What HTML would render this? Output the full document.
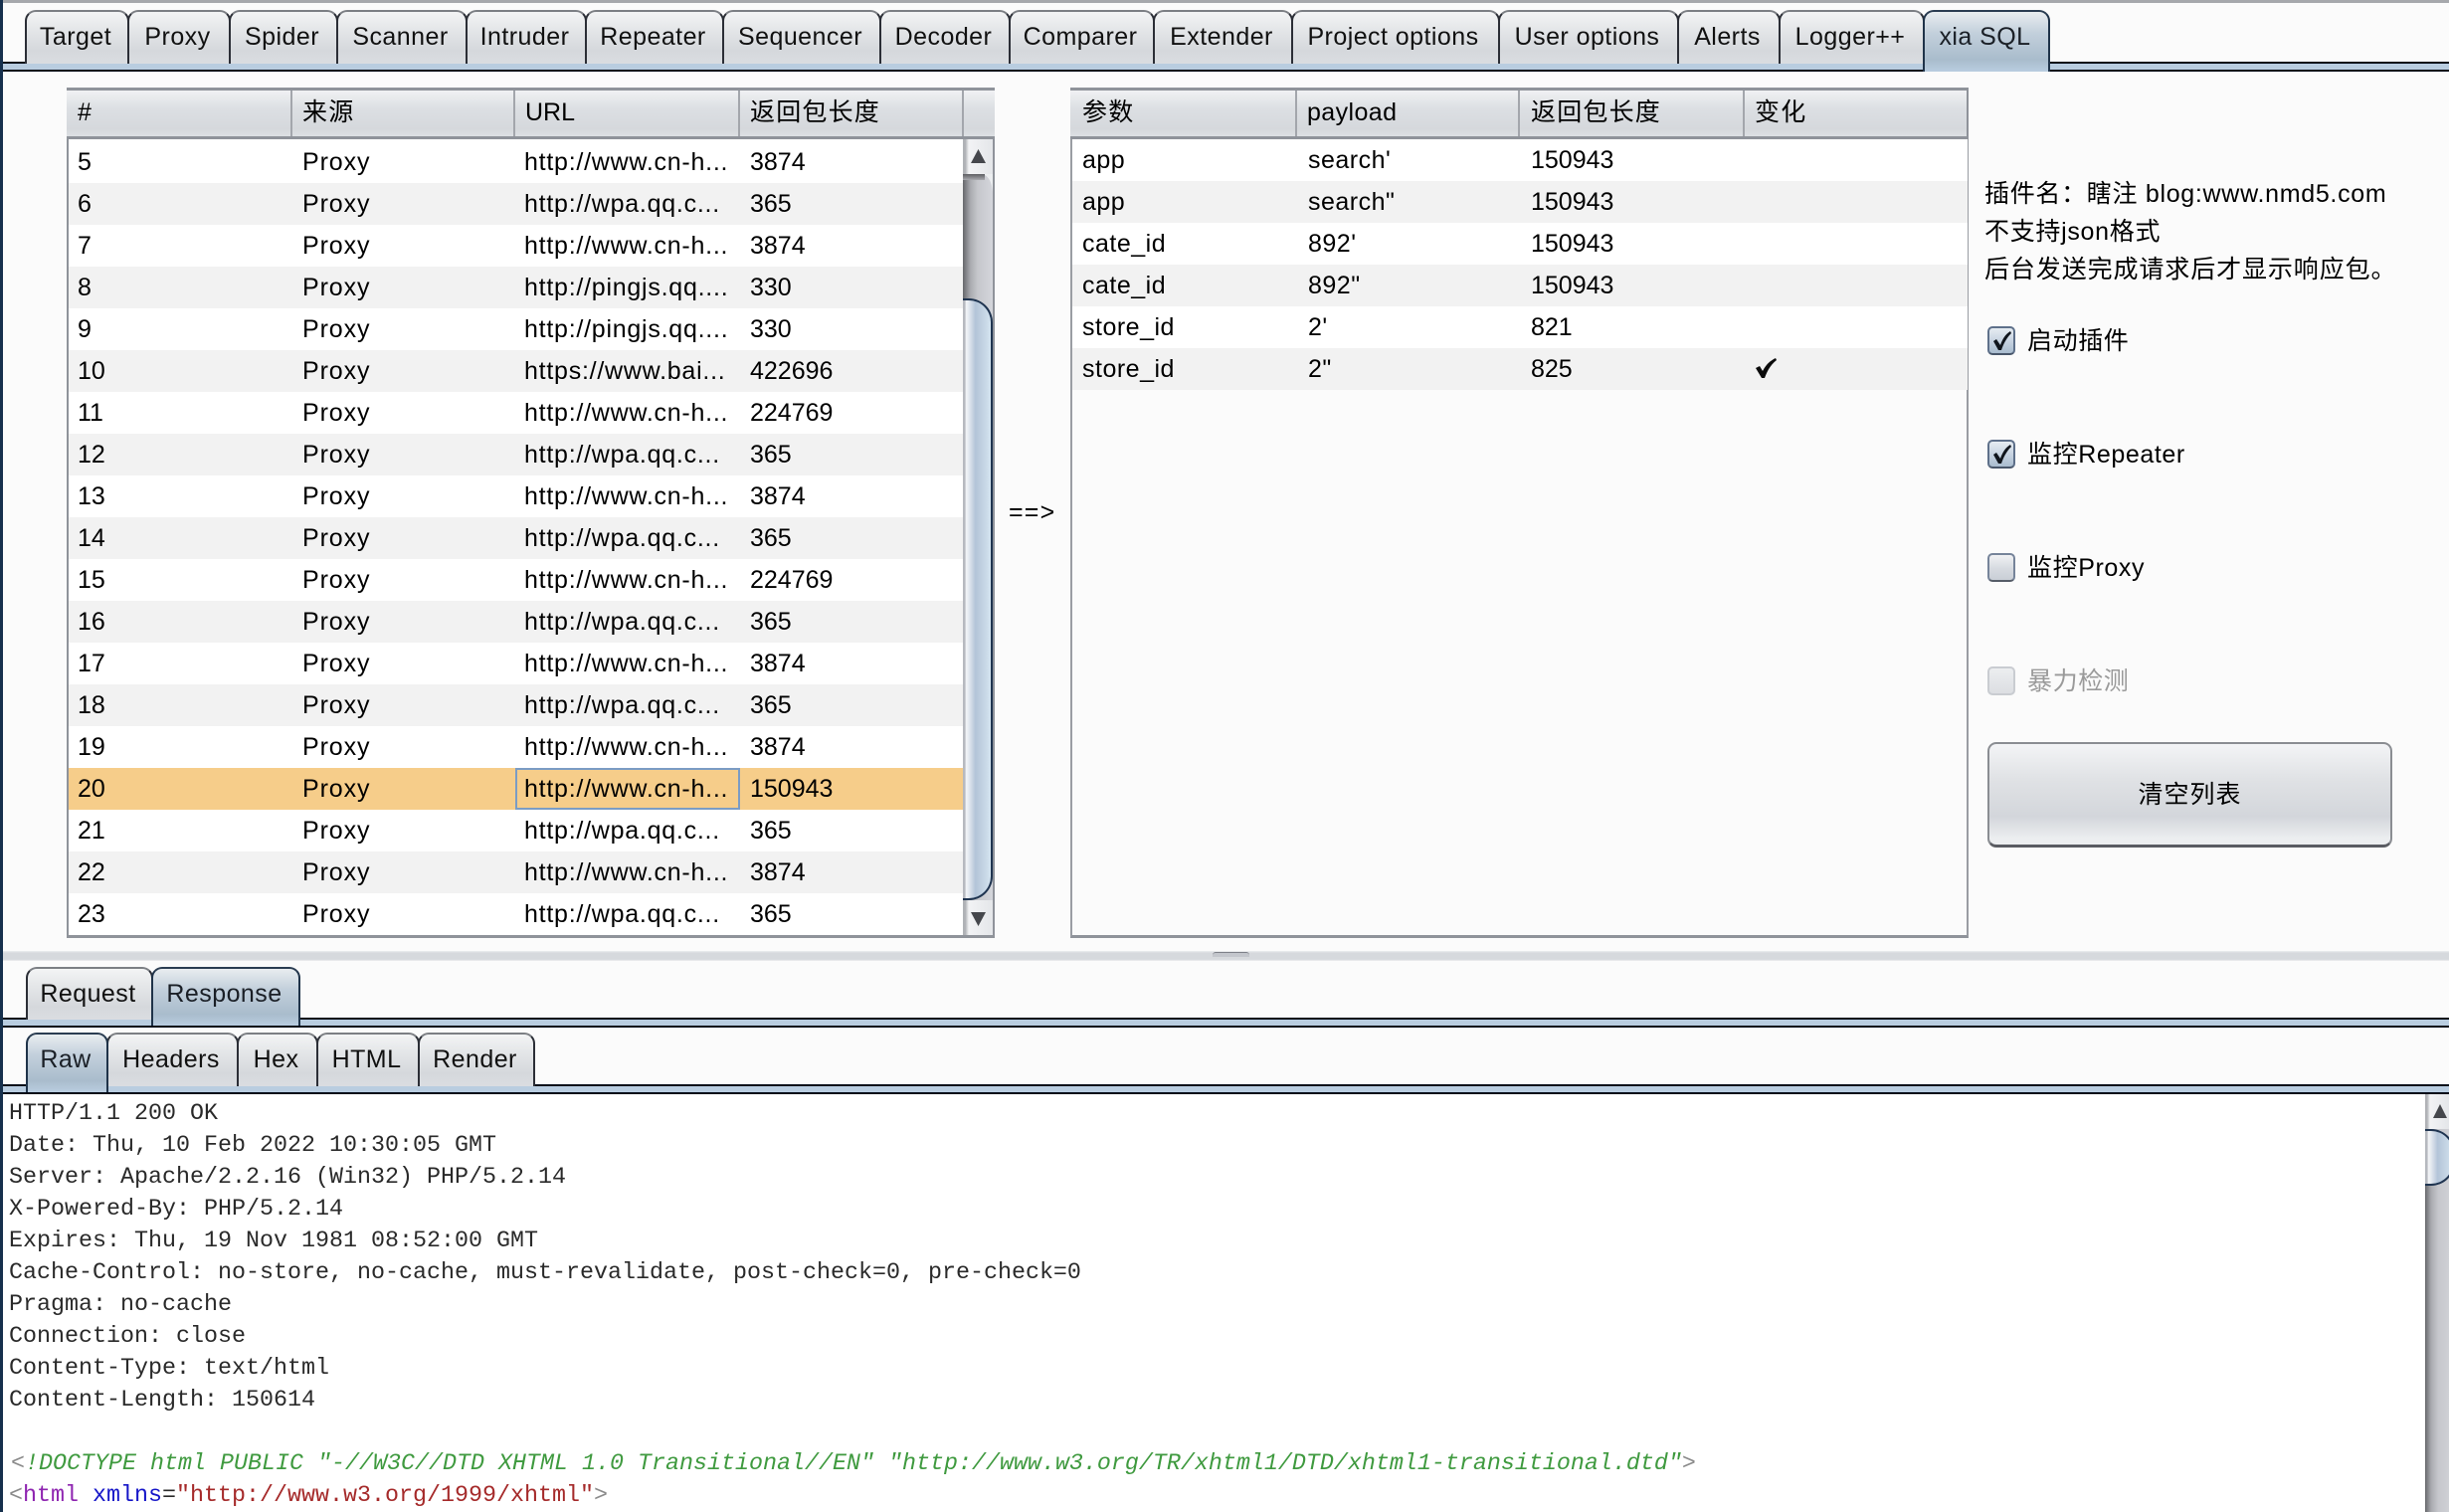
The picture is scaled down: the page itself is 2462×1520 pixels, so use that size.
<!DOCTYPE html>
<html lang="zh"><head><meta charset="utf-8"><title>xia SQL</title>
<style>
html,body{margin:0;padding:0;width:2462px;height:1520px;overflow:hidden;background:#fbfbfb}
body{position:relative;font-family:"Liberation Sans","Noto Sans CJK SC",sans-serif;font-size:25px;color:#000}
div,span{box-sizing:border-box}
.a{position:absolute}
.bar{position:absolute;left:3px;right:0;background:#b9cde0;border-top:2px solid #030a18;border-bottom:2px solid #030a18;height:10px}
.t{position:absolute;height:54px;border:2px solid #2b2e36;border-bottom:0;border-top:2px solid #7c7f84;border-radius:11px 11px 0 0;background:linear-gradient(#f3f4f5,#e6e8ea 30%,#d5d8dc 75%,#dadde1);line-height:51px;text-align:center;white-space:nowrap;color:#111;letter-spacing:.45px;text-indent:-3px}
.t.s{border-color:#1f3349;border-top-color:#2b3d52;background:linear-gradient(#e9edf0,#c3d0dc 35%,#a9bccc 80%,#b9cde0);height:62px;z-index:2;color:#1a1f26}
.h{position:absolute;top:88px;height:52px;border-top:3px solid #8f939a;border-bottom:3px solid #8f939a;background:linear-gradient(#f0f1f3,#dcdfe3 40%,#d5d8dc 85%,#dde0e3)}
.h i{position:absolute;top:0;bottom:0;width:2px;background:#a3a6ac}
.h span{position:absolute;top:0;line-height:45px;white-space:nowrap}
.cj{letter-spacing:1.2px}
.r{position:absolute;left:69px;width:899px;height:42px}
.r span,.q span{position:absolute;top:0;line-height:42px;white-space:nowrap}
.r.o,.q.o{background:#f2f2f2}
.q{position:absolute;left:1078px;width:900px;height:42px}
.q span{letter-spacing:.5px}
.q .k3{letter-spacing:0}
.s1{left:9px}.s2{left:235px;letter-spacing:.9px}.s3{left:458px;letter-spacing:.75px}.s4{left:685px}
.k1{left:10px}.k2{left:237px}.k3{left:461px}.k4{left:686px}
.c{position:absolute;left:1998px;width:28px;height:29px;border:2px solid #76849a;border-bottom-color:#565d68;border-radius:5px;background:linear-gradient(#f1f2f4,#d6dae0 55%,#c9cfd6)}
.c.on{border-color:#5e708a;border-bottom-color:#48566a;background:linear-gradient(#e6ecf2,#c5d2e0 55%,#a9bccf)}
.c.dis{border-color:#c9ccd1;background:linear-gradient(#eceef0,#dcdee2)}
.l{position:absolute;left:2038px;white-space:nowrap;line-height:30px;letter-spacing:.6px}
.m{position:absolute;left:9px;height:32px;line-height:32px;font-family:"Liberation Mono","Noto Sans CJK SC",monospace;font-size:23.33px;white-space:pre;color:#2a2a2a}
.g{color:#3f9a3f;font-style:italic}
.n{position:absolute;left:1995px;line-height:38px;white-space:nowrap;letter-spacing:.7px}
</style></head><body>

<div class="a" style="left:3px;right:0;top:0;height:3px;background:#a6a8ac"></div>
<div class="bar" style="top:62px"></div>

<div class="t" style="left:25px;top:10px;width:105px">Target</div>
<div class="t" style="left:128px;top:10px;width:104px">Proxy</div>
<div class="t" style="left:230px;top:10px;width:110px">Spider</div>
<div class="t" style="left:338px;top:10px;width:132px">Scanner</div>
<div class="t" style="left:468px;top:10px;width:122px">Intruder</div>
<div class="t" style="left:588px;top:10px;width:140px">Repeater</div>
<div class="t" style="left:726px;top:10px;width:160px">Sequencer</div>
<div class="t" style="left:884px;top:10px;width:132px">Decoder</div>
<div class="t" style="left:1014px;top:10px;width:147px">Comparer</div>
<div class="t" style="left:1159px;top:10px;width:141px">Extender</div>
<div class="t" style="left:1298px;top:10px;width:210px;text-indent:-5px">Project options</div>
<div class="t" style="left:1506px;top:10px;width:182px">User options</div>
<div class="t" style="left:1686px;top:10px;width:104px">Alerts</div>
<div class="t" style="left:1788px;top:10px;width:147px">Logger++</div>
<div class="t s" style="left:1933px;top:10px;width:128px">xia SQL</div>

<!-- left table -->
<div class="a" style="left:67px;top:88px;width:933px;height:855px;background:#fff;border:2px solid #8f939a;border-top:0;border-bottom:3px solid #8f939a"></div>
<div class="h" style="left:67px;width:933px">
<i style="left:225px"></i><i style="left:449px"></i><i style="left:675px"></i><i style="left:900px"></i>
<span style="left:11px">#</span><span class="cj" style="left:237px">来源</span><span style="left:461px">URL</span><span class="cj" style="left:687px">返回包长度</span>
</div>

<div class="r" style="top:142px"><span class="s1">5</span><span class="s2">Proxy</span><span class="s3">http://www.cn-h...</span><span class="s4">3874</span></div>
<div class="r o" style="top:184px"><span class="s1">6</span><span class="s2">Proxy</span><span class="s3">http://wpa.qq.c...</span><span class="s4">365</span></div>
<div class="r" style="top:226px"><span class="s1">7</span><span class="s2">Proxy</span><span class="s3">http://www.cn-h...</span><span class="s4">3874</span></div>
<div class="r o" style="top:268px"><span class="s1">8</span><span class="s2">Proxy</span><span class="s3">http://pingjs.qq....</span><span class="s4">330</span></div>
<div class="r" style="top:310px"><span class="s1">9</span><span class="s2">Proxy</span><span class="s3">http://pingjs.qq....</span><span class="s4">330</span></div>
<div class="r o" style="top:352px"><span class="s1">10</span><span class="s2">Proxy</span><span class="s3">https://www.bai...</span><span class="s4">422696</span></div>
<div class="r" style="top:394px"><span class="s1">11</span><span class="s2">Proxy</span><span class="s3">http://www.cn-h...</span><span class="s4">224769</span></div>
<div class="r o" style="top:436px"><span class="s1">12</span><span class="s2">Proxy</span><span class="s3">http://wpa.qq.c...</span><span class="s4">365</span></div>
<div class="r" style="top:478px"><span class="s1">13</span><span class="s2">Proxy</span><span class="s3">http://www.cn-h...</span><span class="s4">3874</span></div>
<div class="r o" style="top:520px"><span class="s1">14</span><span class="s2">Proxy</span><span class="s3">http://wpa.qq.c...</span><span class="s4">365</span></div>
<div class="r" style="top:562px"><span class="s1">15</span><span class="s2">Proxy</span><span class="s3">http://www.cn-h...</span><span class="s4">224769</span></div>
<div class="r o" style="top:604px"><span class="s1">16</span><span class="s2">Proxy</span><span class="s3">http://wpa.qq.c...</span><span class="s4">365</span></div>
<div class="r" style="top:646px"><span class="s1">17</span><span class="s2">Proxy</span><span class="s3">http://www.cn-h...</span><span class="s4">3874</span></div>
<div class="r o" style="top:688px"><span class="s1">18</span><span class="s2">Proxy</span><span class="s3">http://wpa.qq.c...</span><span class="s4">365</span></div>
<div class="r" style="top:730px"><span class="s1">19</span><span class="s2">Proxy</span><span class="s3">http://www.cn-h...</span><span class="s4">3874</span></div>
<div class="r" style="top:772px;background:#f6cd8a"><div class="a" style="left:449px;top:0;width:226px;height:42px;border:2px solid #7b9cc4"></div><span class="s1">20</span><span class="s2">Proxy</span><span class="s3">http://www.cn-h...</span><span class="s4">150943</span></div>
<div class="r" style="top:814px"><span class="s1">21</span><span class="s2">Proxy</span><span class="s3">http://wpa.qq.c...</span><span class="s4">365</span></div>
<div class="r o" style="top:856px"><span class="s1">22</span><span class="s2">Proxy</span><span class="s3">http://www.cn-h...</span><span class="s4">3874</span></div>
<div class="r" style="top:898px"><span class="s1">23</span><span class="s2">Proxy</span><span class="s3">http://wpa.qq.c...</span><span class="s4">365</span></div>

<!-- left scrollbar -->
<div class="a" style="left:968px;top:140px;width:30px;height:800px;background:linear-gradient(90deg,#66676b,#a9aaaf 25%,#c6c7cc 50%,#d4d6dc)"></div>
<div class="a" style="left:968px;top:140px;width:30px;height:35px;background:linear-gradient(90deg,#b0b2b6 0,#b0b2b6 8%,#f2f3f5 20%,#e4e6e9)"></div>
<div class="a" style="left:968px;top:175px;width:30px;height:18px;background:#eceef0;clip-path:path('M20 0 H30 V18 C29 8 26 2 20 0 Z')"></div>
<div class="a" style="left:968px;top:175px;width:22px;height:6px;background:linear-gradient(#5d5e62,#a9aaaf)"></div>
<svg class="a" style="left:976px;top:150px" width="15" height="14"><path d="M7.5 0L15 14H0Z" fill="#45474c"/></svg>
<div class="a" style="left:968px;top:300px;width:30px;height:605px;border-top:2px solid #1f3450;border-right:2px solid #1f3450;border-bottom:2px solid #1f3450;border-radius:0 24px 24px 0;background:linear-gradient(90deg,#b6b9bf 0,#b6b9bf 7%,#f4f6f8 12%,#e6ebf1 20%,#b3c4d8 45%,#c2d2e2 70%,#d4e4f0)"></div>
<div class="a" style="left:968px;top:905px;width:30px;height:35px;background:linear-gradient(90deg,#b0b2b6 0,#b0b2b6 8%,#f2f3f5 20%,#e4e6e9)"></div>
<svg class="a" style="left:976px;top:917px" width="15" height="14"><path d="M0 0H15L7.5 14Z" fill="#45474c"/></svg>

<div class="a" style="left:1014px;top:500px;line-height:30px;letter-spacing:1.2px">==&gt;</div>

<!-- right table -->
<div class="a" style="left:1076px;top:88px;width:903px;height:855px;background:#fbfbfb;border:2px solid #9a9da3;border-top:0;border-bottom:3px solid #8f939a"></div>
<div class="h" style="left:1076px;width:903px">
<i style="left:226px"></i><i style="left:450px"></i><i style="left:676px"></i>
<i style="left:901px;background:#8f939a"></i>
<span class="cj" style="left:12px">参数</span><span style="left:238px;letter-spacing:.4px">payload</span><span class="cj" style="left:463px">返回包长度</span><span class="cj" style="left:688px">变化</span>
</div>
<div class="q" style="top:140px;background:#fff"><span class="k1">app</span><span class="k2">search'</span><span class="k3">150943</span></div>
<div class="q o" style="top:182px"><span class="k1">app</span><span class="k2">search"</span><span class="k3">150943</span></div>
<div class="q" style="top:224px;background:#fff"><span class="k1">cate_id</span><span class="k2">892'</span><span class="k3">150943</span></div>
<div class="q o" style="top:266px"><span class="k1">cate_id</span><span class="k2">892"</span><span class="k3">150943</span></div>
<div class="q" style="top:308px;background:#fff"><span class="k1">store_id</span><span class="k2">2'</span><span class="k3">821</span></div>
<div class="q o" style="top:350px"><span class="k1">store_id</span><span class="k2">2"</span><span class="k3">825</span></div>
<svg class="a" style="left:1764px;top:360px" width="22" height="20"><path d="M1 10L5 8L8 13C11 7 15 3 21 0L22 2C16 7 13 12 10 20H7Z" fill="#0c0c0c"/></svg>

<!-- info text -->
<div class="n" style="top:176px">插件名：瞎注 blog:www.nmd5.com</div>
<div class="n" style="top:214px">不支持json格式</div>
<div class="n" style="top:252px;letter-spacing:.9px">后台发送完成请求后才显示响应包。</div>

<div class="c on" style="top:328px"></div>
<svg class="a" style="left:2003px;top:332px" width="19" height="21"><path d="M1 11L4 9L8 15C10 9 13 4 18 1L19 3C14 8 11 14 9 20H6Z" fill="#10151c"/></svg>
<div class="l" style="top:328px">启动插件</div>
<div class="c on" style="top:442px"></div>
<svg class="a" style="left:2003px;top:446px" width="19" height="21"><path d="M1 11L4 9L8 15C10 9 13 4 18 1L19 3C14 8 11 14 9 20H6Z" fill="#10151c"/></svg>
<div class="l" style="top:442px">监控Repeater</div>
<div class="c" style="top:556px"></div>
<div class="l" style="top:556px">监控Proxy</div>
<div class="c dis" style="top:670px"></div>
<div class="l" style="top:670px;color:#9a9a9a">暴力检测</div>

<div class="a" style="left:1998px;top:746px;width:407px;height:106px;border:2px solid #8a8d92;border-bottom:3px solid #5a5c62;border-radius:9px;background:linear-gradient(#f3f4f6,#e0e2e5 35%,#d3d6db 72%,#eceef0 94%);text-align:center;line-height:103px;letter-spacing:1px">清空列表</div>

<!-- splitter -->
<div class="a" style="left:3px;right:0;top:956px;height:10px;background:linear-gradient(#eceef0,#d6d9dd 20%,#d6d9dd 85%,#f0f1f2)"></div>
<div class="a" style="left:1219px;top:957px;width:37px;height:5px;border-top:1px solid #7d8088;background:#c3c6cc;border-radius:3px 3px 0 0"></div>

<!-- request/response -->
<div class="bar" style="top:1023px"></div>
<div class="t" style="left:26px;top:972px;width:128px;height:53px">Request</div>
<div class="t s" style="left:152px;top:972px;width:150px;height:59px">Response</div>

<!-- raw tabs -->
<div class="bar" style="top:1090px"></div>
<div class="t s" style="left:26px;top:1038px;width:83px;height:60px">Raw</div>
<div class="t" style="left:107px;top:1038px;width:133px;height:54px">Headers</div>
<div class="t" style="left:238px;top:1038px;width:82px;height:54px">Hex</div>
<div class="t" style="left:318px;top:1038px;width:104px;height:54px">HTML</div>
<div class="t" style="left:420px;top:1038px;width:118px;height:54px">Render</div>

<!-- response body -->
<div class="a" style="left:3px;right:0;top:1100px;height:420px;background:#fff"></div>
<div class="m" style="top:1104px">HTTP/1.1 200 OK</div>
<div class="m" style="top:1136px">Date: Thu, 10 Feb 2022 10:30:05 GMT</div>
<div class="m" style="top:1168px">Server: Apache/2.2.16 (Win32) PHP/5.2.14</div>
<div class="m" style="top:1200px">X-Powered-By: PHP/5.2.14</div>
<div class="m" style="top:1232px">Expires: Thu, 19 Nov 1981 08:52:00 GMT</div>
<div class="m" style="top:1264px">Cache-Control: no-store, no-cache, must-revalidate, post-check=0, pre-check=0</div>
<div class="m" style="top:1296px">Pragma: no-cache</div>
<div class="m" style="top:1328px">Connection: close</div>
<div class="m" style="top:1360px">Content-Type: text/html</div>
<div class="m" style="top:1392px">Content-Length: 150614</div>
<div class="m" style="top:1456px;left:11px"><span style="color:#8a8a8a">&lt;</span><span class="g">!DOCTYPE html PUBLIC "-//W3C//DTD XHTML 1.0 Transitional//EN" "http://www.w3.org/TR/xhtml1/DTD/xhtml1-transitional.dtd"</span><span style="color:#8a8a8a">&gt;</span></div>
<div class="m" style="top:1488px"><span style="color:#8a8a8a">&lt;</span><span style="color:#8e24b0">html</span> <span style="color:#1616c8">xmlns</span>=<span style="color:#a52a2a">"http://www.w3.org/1999/xhtml"</span><span style="color:#8a8a8a">&gt;</span></div>

<!-- right scrollbar -->
<div class="a" style="left:2438px;top:1100px;width:24px;height:420px;background:linear-gradient(90deg,#66676b,#a9aaaf 25%,#c6c7cc 55%,#cfd0d5)"></div>
<div class="a" style="left:2438px;top:1100px;width:24px;height:35px;background:linear-gradient(90deg,#b0b2b6 0,#b0b2b6 8%,#f2f3f5 20%,#e4e6e9)"></div>
<svg class="a" style="left:2446px;top:1110px" width="14" height="14"><path d="M7 0L14 14H0Z" fill="#45474c"/></svg>
<div class="a" style="left:2438px;top:1135px;width:30px;height:57px;border:2px solid #1f3450;border-left:0;border-radius:0 24px 24px 0;background:linear-gradient(90deg,#b6b9bf 0,#b6b9bf 7%,#f4f6f8 12%,#e6ebf1 20%,#b3c4d8 45%,#c2d2e2 70%,#d4e4f0)"></div>

<!-- left edge -->
<div class="a" style="left:0;top:0;width:3px;height:1520px;background:#16304d;z-index:5"></div>
</body></html>
